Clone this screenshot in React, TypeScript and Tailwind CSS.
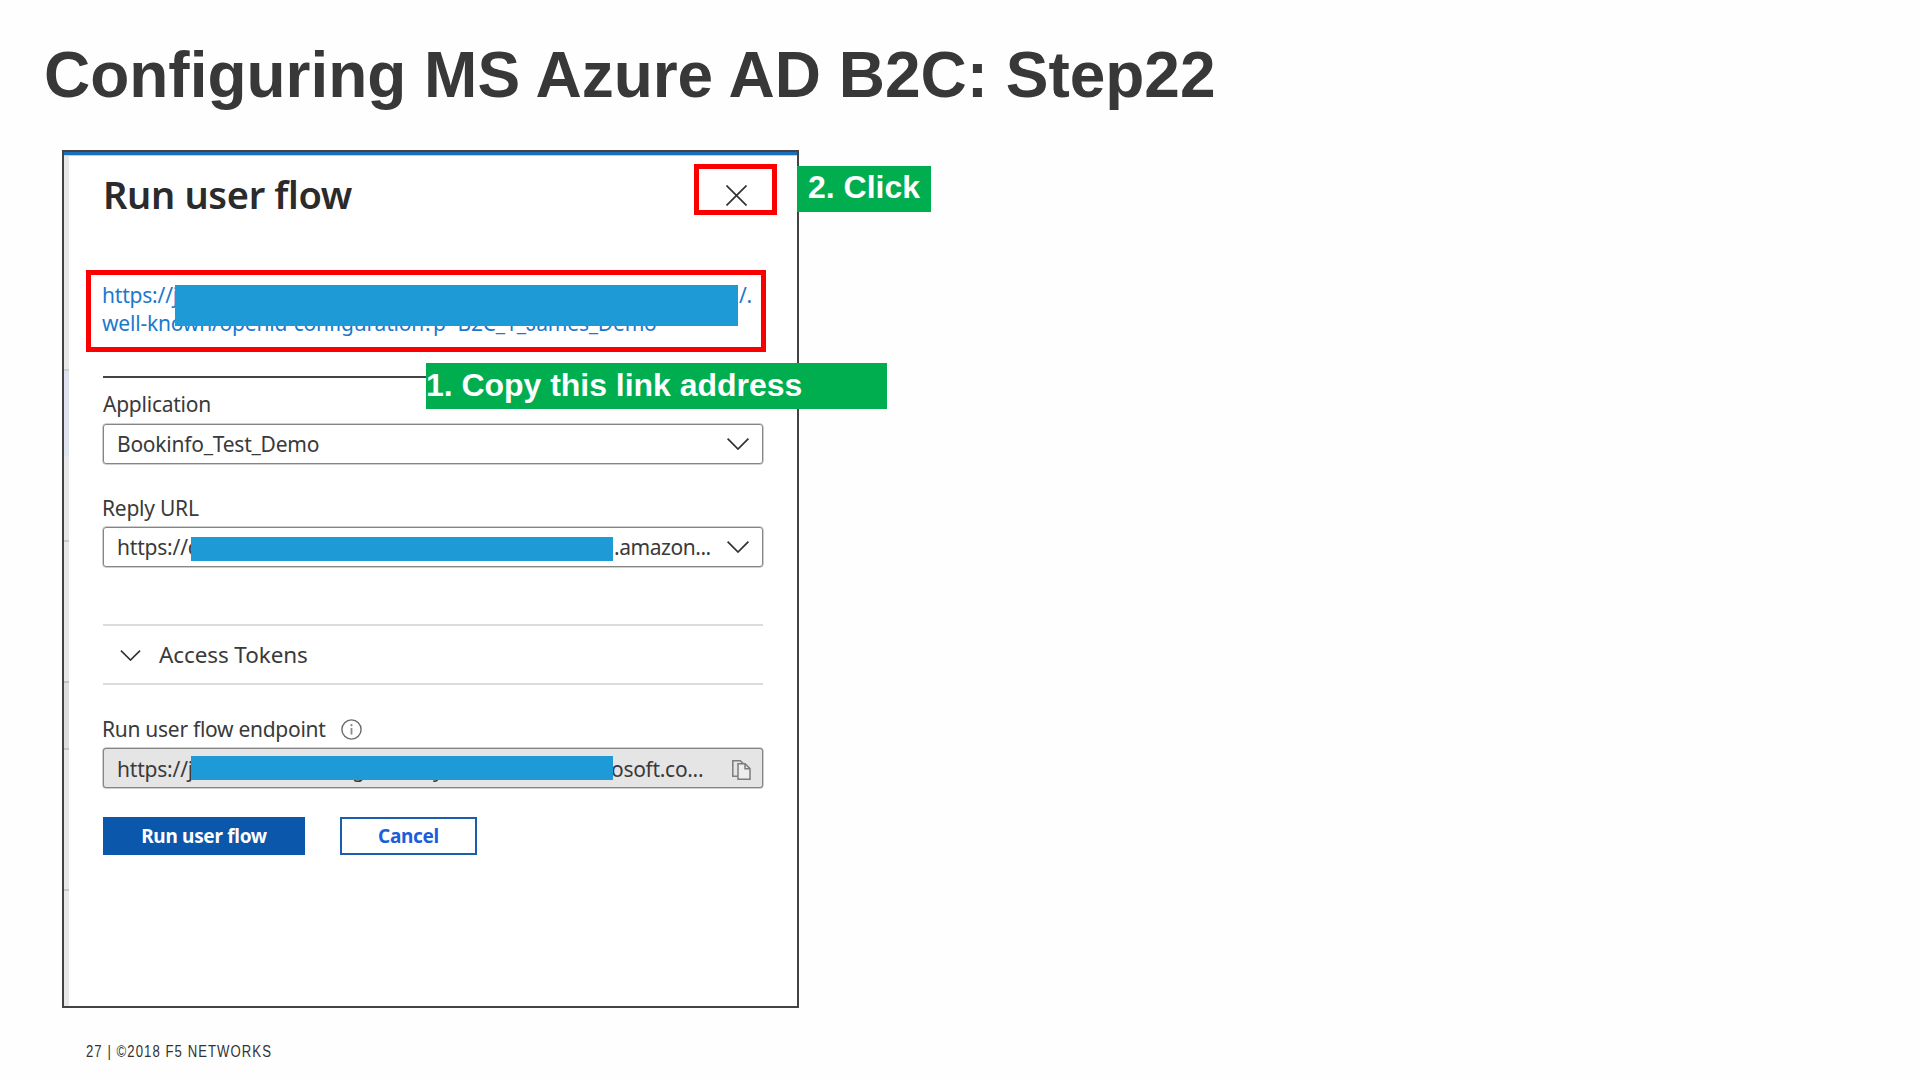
import type { ReactNode } from "react";

const noto = "font-['Noto_Sans',sans-serif]";
const arial = "font-['Liberation_Sans',Arial,sans-serif]";

function Chevron({ className = "" }: { className?: string }) {
  return (
    <svg className={`shrink-0 ${className}`} viewBox="0 0 22 12" fill="none" stroke="#303030" strokeWidth="1.7">
      <path d="M0.6 0.7 L11 11 L21.4 0.7" />
    </svg>
  );
}

function CloseIcon() {
  return (
    <svg className="mt-[2px] h-[21px] w-[21px]" viewBox="0 0 21 21" stroke="#303030" strokeWidth="1.6">
      <path d="M0.5 0.5 L20.5 20.5 M20.5 0.5 L0.5 20.5" />
    </svg>
  );
}

function InfoIcon() {
  return (
    <svg className="h-[21px] w-[21px]" viewBox="0 0 21 21" fill="none">
      <circle cx="10.5" cy="10.5" r="9.6" stroke="#6a6a6a" strokeWidth="1.4" />
      <path d="M10.5 9 V15.5" stroke="#8a8a8a" strokeWidth="1.8" />
      <circle cx="10.5" cy="6.2" r="1.1" fill="#8a8a8a" />
    </svg>
  );
}

function CopyIcon() {
  return (
    <svg className="mt-[2px] h-[20px] w-[19px]" viewBox="0 0 19 20" fill="none" stroke="#7c7c7c" strokeWidth="1.5">
      <path d="M5.5 16.3 H0.8 V0.8 H8.3 L11.3 3.6" />
      <path d="M6 3.8 H13 L18 8.6 V19.2 H6 Z" fill="#ededed" />
      <path d="M13 3.8 V8.8 H18" />
    </svg>
  );
}

function Label({ children, className = "" }: { children: ReactNode; className?: string }) {
  return (
    <div className={`flex h-7 items-center text-[21px] leading-7 tracking-[-0.24px] whitespace-pre text-[#3a3a3a] ${className}`}>
      {children}
    </div>
  );
}

function Field({ children, className = "" }: { children: ReactNode; className?: string }) {
  return (
    <div
      className={`relative flex h-10 items-center rounded-[3px] border-[1.5px] border-[#858585] pl-[13px] text-[21px] leading-7 whitespace-pre text-[#3a3a3a] shadow-[0_0_0_0.5px_#a0a0a0] ${className}`}
    >
      {children}
    </div>
  );
}

function BackgroundStrip() {
  return (
    <div className="flex w-[5px] shrink-0 flex-col bg-[#e9e8e8]">
      <div className="h-[215px] border-b-2 border-[#cfcfcf]" />
      <div className="h-[85px] bg-[#dfe3ef]" />
      <div className="h-[86px] border-b-2 border-[#c8c8c8]" />
      <div className="h-[141px] border-b-2 border-[#c0c0c0]" />
      <div className="h-[67px] border-b-2 border-[#c4c4c4] bg-[#dedede]" />
      <div className="h-[141px] border-b-2 border-[#c8c8c8]" />
    </div>
  );
}

export default function App() {
  return (
    <main className={`relative flex h-[1080px] w-[1920px] flex-col overflow-hidden bg-[#fefefe] ${noto}`}>
      <h1 className={`mt-[43px] ml-[44px] h-16 text-[64px] leading-[64px] font-bold tracking-[-0.02px] whitespace-nowrap text-[#383838] ${arial}`}>
        Configuring MS Azure AD B2C: Step22
      </h1>

      <section className="relative mt-[43px] ml-[62px] flex h-[858px] w-[737px] flex-col border-2 border-[#434343] bg-white">
        <div className="h-[4px] shrink-0 border-b border-[#a9d8f5] bg-[#1a6fbd]" />
        <div className="flex flex-1">
          <BackgroundStrip />
          <div className="ml-[34px] flex w-[660px] flex-col">
            <header className="mt-[13px] flex h-[50px] items-center justify-between pr-4">
              <h2 className="text-[38px] leading-[50px] font-semibold tracking-[-0.34px] text-[#2b2b2b]">Run user flow</h2>
              <CloseIcon />
            </header>

            <div className="mt-[62px] ml-[-1px] h-[56px] text-[21px] leading-7 tracking-[-0.2px] whitespace-pre text-[#1b79cc]">
              <div className="flex justify-between pr-[11px]">
                <span>https://j</span>
                <span>/.</span>
              </div>
              <div>
                well-known/openid-configuration?p=B2C_1_
                <span className={arial}>J</span>ames_Demo
              </div>
            </div>

            <div className="mt-[39px] h-[2px] bg-[#444]" />

            <Label className="mt-3">Application</Label>
            <Field className="mt-[6px] justify-between pr-[13px]">
              <span className="tracking-[-0.24px]">Bookinfo_Test_Demo</span>
              <Chevron className="h-[12px] w-[22px]" />
            </Field>

            <Label className="mt-[30px] ml-[-1px]">Reply URL</Label>
            <Field className="mt-[5px] pr-[13px]">
              <span className="w-[497px] tracking-[-0.2px]">https://c</span>
              <span className="flex-1 tracking-[-0.45px]">.amazon...</span>
              <Chevron className="h-[12px] w-[22px]" />
              <div className="absolute top-[9px] left-[87px] h-6 w-[422px] bg-[#1e9ad6]" />
            </Field>

            <div className="mt-[57px] flex h-[61px] items-center gap-[18px] border-y-2 border-[#dcdcdc] pl-[17px]">
              <Chevron className="mt-0.5 h-[11px] w-[21px]" />
              <span className="text-[22.5px] leading-7 tracking-[-0.1px] text-[#3a3a3a]">Access Tokens</span>
            </div>

            <Label className="mt-[30px] ml-[-1px] gap-[15px]">
              <span className="tracking-[-0.28px]">Run user flow endpoint</span>
              <InfoIcon />
            </Label>
            <Field className="mt-[5px] bg-[#e6e5e5] pt-px pr-[11px]">
              <span className="w-[235px] tracking-[-0.2px]">https://j</span>
              <span className="w-[81px]">g</span>
              <span className="w-[178px]">y</span>
              <span className="flex-1 tracking-[-0.3px]">osoft.co...</span>
              <CopyIcon />
              <div className="absolute top-[7px] left-[87px] h-6 w-[422px] bg-[#1e9ad6]" />
            </Field>

            <div className="mt-[29px] flex gap-[35px] text-[19px] font-bold">
              <button className="h-[38px] w-[202px] bg-[#0a57ac] pt-px tracking-[-0.3px] text-white">Run user flow</button>
              <button className="h-[38px] w-[137px] border-2 border-[#1a5cae] bg-white pt-px tracking-[-0.3px] text-[#1a5edb]">Cancel</button>
            </div>
          </div>
        </div>

        <div className="absolute top-[133px] left-[111px] h-[41px] w-[563px] bg-[#1e9ad6]" />
        <div className="absolute top-[118px] left-[22px] h-[82px] w-[680px] border-[5px] border-[#fb0000]" />
        <div className="absolute top-[12px] left-[630px] h-[51px] w-[83px] border-[5px] border-[#fb0000]" />
        <div className={`absolute top-[14px] left-[733px] h-[46px] w-[134px] bg-[#00ae50] pt-[3px] pl-[11px] text-[32px] leading-9 font-bold whitespace-nowrap text-white ${arial}`}>
          2. Click
        </div>
        <div className={`absolute top-[211px] left-[362px] h-[46px] w-[461px] bg-[#00ae50] pt-[4px] text-[32px] leading-9 font-bold tracking-[-0.03px] whitespace-nowrap text-white ${arial}`}>
          1. Copy this link address
        </div>
      </section>

      <footer className={`mt-[34px] ml-[86px] h-5 origin-left scale-x-[0.82] text-[16px] leading-5 tracking-[1.3px] whitespace-nowrap text-[#333] ${arial}`}>
        27 | ©2018 F5 NETWORKS
      </footer>
    </main>
  );
}
